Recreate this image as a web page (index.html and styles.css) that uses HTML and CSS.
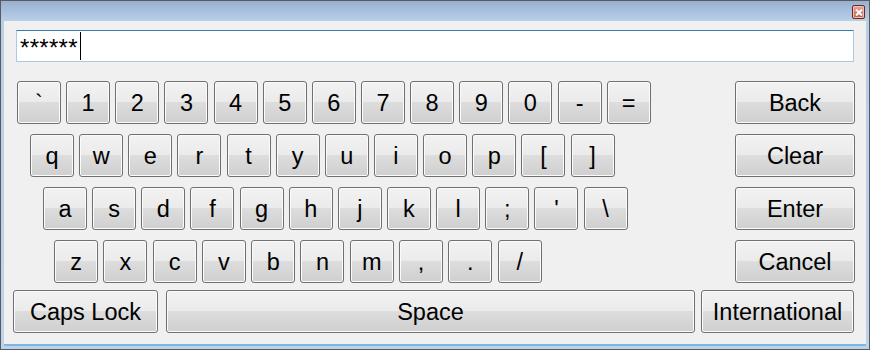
FILE: index.html
```html
<!DOCTYPE html>
<html lang="en">
<head>
    <meta charset="UTF-8">
    <title>Keyboard</title>
    <link rel="stylesheet" href="styles.css">
</head>
<body>

<div class="window">
    <div class="titlebar">
        <div class="close-btn">
            <svg width="8" height="7" viewBox="0 0 8 7">
                <path d="M1 0.5 L7 6.5 M7 0.5 L1 6.5" stroke="#fff" stroke-width="2"/>
            </svg>
        </div>
    </div>
    <div class="client">
        <div class="text-box"><span class="typed">******</span><span class="caret"></span></div>

        <div class="keyboard">
            <div class="row row-1">
                <div class="key">`</div>
                <div class="key">1</div>
                <div class="key">2</div>
                <div class="key">3</div>
                <div class="key">4</div>
                <div class="key">5</div>
                <div class="key">6</div>
                <div class="key">7</div>
                <div class="key">8</div>
                <div class="key">9</div>
                <div class="key">0</div>
                <div class="key">-</div>
                <div class="key">=</div>
                <div class="key wide">Back</div>
            </div>
            <div class="row row-2">
                <div class="key">q</div>
                <div class="key">w</div>
                <div class="key">e</div>
                <div class="key">r</div>
                <div class="key">t</div>
                <div class="key">y</div>
                <div class="key">u</div>
                <div class="key">i</div>
                <div class="key">o</div>
                <div class="key">p</div>
                <div class="key">[</div>
                <div class="key">]</div>
                <div class="key wide">Clear</div>
            </div>
            <div class="row row-3">
                <div class="key">a</div>
                <div class="key">s</div>
                <div class="key">d</div>
                <div class="key">f</div>
                <div class="key">g</div>
                <div class="key">h</div>
                <div class="key">j</div>
                <div class="key">k</div>
                <div class="key">l</div>
                <div class="key">;</div>
                <div class="key">'</div>
                <div class="key">\</div>
                <div class="key wide">Enter</div>
            </div>
            <div class="row row-4">
                <div class="key">z</div>
                <div class="key">x</div>
                <div class="key">c</div>
                <div class="key">v</div>
                <div class="key">b</div>
                <div class="key">n</div>
                <div class="key">m</div>
                <div class="key">,</div>
                <div class="key">.</div>
                <div class="key">/</div>
                <div class="key wide">Cancel</div>
            </div>
            <div class="row row-bottom">
                <div class="key caps">Caps Lock</div>
                <div class="key space">Space</div>
                <div class="key intl">International</div>
            </div>
        </div>
    </div>
</div>

</body>
</html>
```

FILE: styles.css
```css
html, body {
    margin: 0;
    padding: 0;
}
body {
    font-family: "Liberation Sans", Arial, sans-serif;
    background-color: #f0f0f0;
}
.window {
    width: 870px;
    height: 350px;
    box-sizing: border-box;
    border: 1px solid #5a5a5a;
    background: linear-gradient(#98b1d2 0px, #b8cfe9 20px, #bcd3ec 100%);
    padding: 0 3px 3px 3px;
    display: flex;
    flex-direction: column;
}
.titlebar {
    height: 20px;
    position: relative;
}
.close-btn {
    position: absolute;
    right: 1px;
    top: 4px;
    width: 11px;
    height: 12px;
    border: 1px solid #6b2a22;
    border-radius: 2px;
    background: linear-gradient(#e8a89a, #c85a48);
    box-shadow: inset 0 0 0 1px #f0c0b4;
    display: flex;
    align-items: center;
    justify-content: center;
}
.client {
    flex: 1;
    background-color: #f0f0f0;
    padding-top: 9px;
    border-bottom: 2px solid #7fb6e6;
}
.text-box {
    margin: 0 12px;
    height: 32px;
    box-sizing: border-box;
    background: white;
    border: 1px solid #a9cbe6;
    border-top-color: #3d7bad;
    display: flex;
    align-items: center;
    padding-left: 3px;
    font-size: 24px;
}
.typed {
    margin-top: 4px;
    letter-spacing: 0.3px;
}
.caret {
    width: 1px;
    height: 28px;
    background: black;
    margin-left: 2px;
}
.keyboard {
    margin-top: 19px;
    display: flex;
    flex-direction: column;
    gap: 10px;
}
.row {
    display: flex;
    gap: 5.15px;
    padding-right: 11px;
}
.row-1 { padding-left: 13px; }
.row-2 { padding-left: 26px; }
.row-3 { padding-left: 39px; }
.row-4 { padding-left: 50px; gap: 5.3px; }
.row-bottom {
    padding-left: 9px;
    padding-right: 12px;
    margin-top: -3px;
    gap: 0;
}
.key {
    width: 44px;
    height: 43px;
    box-sizing: border-box;
    border: 1px solid #707070;
    border-radius: 3px;
    background: linear-gradient(#f2f2f2 0%, #ebebeb 48%, #dddddd 50%, #cfcfcf 100%);
    box-shadow: inset 0 0 0 1px #fbfbfb;
    display: flex;
    align-items: center;
    justify-content: center;
    padding-top: 2px;
    font-size: 23.5px;
    color: #000;
}
.key.wide {
    width: 120px;
    margin-left: auto;
}
.key.caps {
    width: 145px;
}
.key.space {
    margin-left: 8px;
    width: 529px;
}
.key.intl {
    margin-left: 6px;
    flex: 1;
}
```
